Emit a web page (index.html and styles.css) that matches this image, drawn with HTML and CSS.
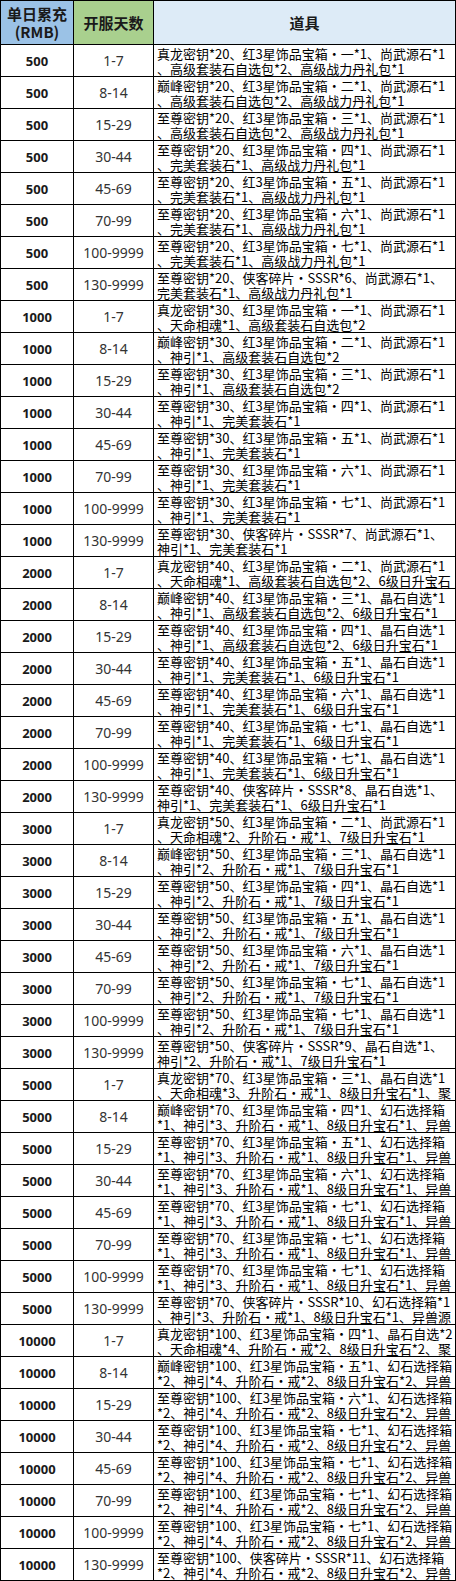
FILE: index.html
```html
<!DOCTYPE html>
<html lang="zh-CN">
<head>
<meta charset="utf-8">
<title>单日累充</title>
<link rel="stylesheet" href="styles.css">
</head>
<body>
<table class="rewards">
<colgroup><col class="c-amt"><col class="c-days"><col class="c-items"></colgroup>
<thead>
<tr>
<th class="h-amt"><div class="hcell">单日累充<br>(RMB)</div></th>
<th class="h-days"><div class="hcell">开服天数</div></th>
<th class="h-items"><div class="hcell">道具</div></th>
</tr>
</thead>
<tbody>
<tr><td class="amt"><div class="cell">500</div></td><td class="days"><div class="cell">1-7</div></td><td class="items"><div class="clip">真龙密钥*20、红3星饰品宝箱・一*1、尚武源石*1<br>、高级套装石自选包*2、高级战力丹礼包*1</div></td></tr>
<tr><td class="amt"><div class="cell">500</div></td><td class="days"><div class="cell">8-14</div></td><td class="items"><div class="clip">巅峰密钥*20、红3星饰品宝箱・二*1、尚武源石*1<br>、高级套装石自选包*2、高级战力丹礼包*1</div></td></tr>
<tr><td class="amt"><div class="cell">500</div></td><td class="days"><div class="cell">15-29</div></td><td class="items"><div class="clip">至尊密钥*20、红3星饰品宝箱・三*1、尚武源石*1<br>、高级套装石自选包*2、高级战力丹礼包*1</div></td></tr>
<tr><td class="amt"><div class="cell">500</div></td><td class="days"><div class="cell">30-44</div></td><td class="items"><div class="clip">至尊密钥*20、红3星饰品宝箱・四*1、尚武源石*1<br>、完美套装石*1、高级战力丹礼包*1</div></td></tr>
<tr><td class="amt"><div class="cell">500</div></td><td class="days"><div class="cell">45-69</div></td><td class="items"><div class="clip">至尊密钥*20、红3星饰品宝箱・五*1、尚武源石*1<br>、完美套装石*1、高级战力丹礼包*1</div></td></tr>
<tr><td class="amt"><div class="cell">500</div></td><td class="days"><div class="cell">70-99</div></td><td class="items"><div class="clip">至尊密钥*20、红3星饰品宝箱・六*1、尚武源石*1<br>、完美套装石*1、高级战力丹礼包*1</div></td></tr>
<tr><td class="amt"><div class="cell">500</div></td><td class="days"><div class="cell">100-9999</div></td><td class="items"><div class="clip">至尊密钥*20、红3星饰品宝箱・七*1、尚武源石*1<br>、完美套装石*1、高级战力丹礼包*1</div></td></tr>
<tr><td class="amt"><div class="cell">500</div></td><td class="days"><div class="cell">130-9999</div></td><td class="items"><div class="clip">至尊密钥*20、侠客碎片・SSSR*6、尚武源石*1、<br>完美套装石*1、高级战力丹礼包*1</div></td></tr>

<tr><td class="amt"><div class="cell">1000</div></td><td class="days"><div class="cell">1-7</div></td><td class="items"><div class="clip">真龙密钥*30、红3星饰品宝箱・一*1、尚武源石*1<br>、天命相魂*1、高级套装石自选包*2</div></td></tr>
<tr><td class="amt"><div class="cell">1000</div></td><td class="days"><div class="cell">8-14</div></td><td class="items"><div class="clip">巅峰密钥*30、红3星饰品宝箱・二*1、尚武源石*1<br>、神引*1、高级套装石自选包*2</div></td></tr>
<tr><td class="amt"><div class="cell">1000</div></td><td class="days"><div class="cell">15-29</div></td><td class="items"><div class="clip">至尊密钥*30、红3星饰品宝箱・三*1、尚武源石*1<br>、神引*1、高级套装石自选包*2</div></td></tr>
<tr><td class="amt"><div class="cell">1000</div></td><td class="days"><div class="cell">30-44</div></td><td class="items"><div class="clip">至尊密钥*30、红3星饰品宝箱・四*1、尚武源石*1<br>、神引*1、完美套装石*1</div></td></tr>
<tr><td class="amt"><div class="cell">1000</div></td><td class="days"><div class="cell">45-69</div></td><td class="items"><div class="clip">至尊密钥*30、红3星饰品宝箱・五*1、尚武源石*1<br>、神引*1、完美套装石*1</div></td></tr>
<tr><td class="amt"><div class="cell">1000</div></td><td class="days"><div class="cell">70-99</div></td><td class="items"><div class="clip">至尊密钥*30、红3星饰品宝箱・六*1、尚武源石*1<br>、神引*1、完美套装石*1</div></td></tr>
<tr><td class="amt"><div class="cell">1000</div></td><td class="days"><div class="cell">100-9999</div></td><td class="items"><div class="clip">至尊密钥*30、红3星饰品宝箱・七*1、尚武源石*1<br>、神引*1、完美套装石*1</div></td></tr>
<tr><td class="amt"><div class="cell">1000</div></td><td class="days"><div class="cell">130-9999</div></td><td class="items"><div class="clip">至尊密钥*30、侠客碎片・SSSR*7、尚武源石*1、<br>神引*1、完美套装石*1</div></td></tr>

<tr><td class="amt"><div class="cell">2000</div></td><td class="days"><div class="cell">1-7</div></td><td class="items"><div class="clip">真龙密钥*40、红3星饰品宝箱・二*1、尚武源石*1<br>、天命相魂*1、高级套装石自选包*2、6级日升宝石</div></td></tr>
<tr><td class="amt"><div class="cell">2000</div></td><td class="days"><div class="cell">8-14</div></td><td class="items"><div class="clip">巅峰密钥*40、红3星饰品宝箱・三*1、晶石自选*1<br>、神引*1、高级套装石自选包*2、6级日升宝石*1</div></td></tr>
<tr><td class="amt"><div class="cell">2000</div></td><td class="days"><div class="cell">15-29</div></td><td class="items"><div class="clip">至尊密钥*40、红3星饰品宝箱・四*1、晶石自选*1<br>、神引*1、高级套装石自选包*2、6级日升宝石*1</div></td></tr>
<tr><td class="amt"><div class="cell">2000</div></td><td class="days"><div class="cell">30-44</div></td><td class="items"><div class="clip">至尊密钥*40、红3星饰品宝箱・五*1、晶石自选*1<br>、神引*1、完美套装石*1、6级日升宝石*1</div></td></tr>
<tr><td class="amt"><div class="cell">2000</div></td><td class="days"><div class="cell">45-69</div></td><td class="items"><div class="clip">至尊密钥*40、红3星饰品宝箱・六*1、晶石自选*1<br>、神引*1、完美套装石*1、6级日升宝石*1</div></td></tr>
<tr><td class="amt"><div class="cell">2000</div></td><td class="days"><div class="cell">70-99</div></td><td class="items"><div class="clip">至尊密钥*40、红3星饰品宝箱・七*1、晶石自选*1<br>、神引*1、完美套装石*1、6级日升宝石*1</div></td></tr>
<tr><td class="amt"><div class="cell">2000</div></td><td class="days"><div class="cell">100-9999</div></td><td class="items"><div class="clip">至尊密钥*40、红3星饰品宝箱・七*1、晶石自选*1<br>、神引*1、完美套装石*1、6级日升宝石*1</div></td></tr>
<tr><td class="amt"><div class="cell">2000</div></td><td class="days"><div class="cell">130-9999</div></td><td class="items"><div class="clip">至尊密钥*40、侠客碎片・SSSR*8、晶石自选*1、<br>神引*1、完美套装石*1、6级日升宝石*1</div></td></tr>

<tr><td class="amt"><div class="cell">3000</div></td><td class="days"><div class="cell">1-7</div></td><td class="items"><div class="clip">真龙密钥*50、红3星饰品宝箱・二*1、尚武源石*1<br>、天命相魂*2、升阶石・戒*1、7级日升宝石*1</div></td></tr>
<tr><td class="amt"><div class="cell">3000</div></td><td class="days"><div class="cell">8-14</div></td><td class="items"><div class="clip">巅峰密钥*50、红3星饰品宝箱・三*1、晶石自选*1<br>、神引*2、升阶石・戒*1、7级日升宝石*1</div></td></tr>
<tr><td class="amt"><div class="cell">3000</div></td><td class="days"><div class="cell">15-29</div></td><td class="items"><div class="clip">至尊密钥*50、红3星饰品宝箱・四*1、晶石自选*1<br>、神引*2、升阶石・戒*1、7级日升宝石*1</div></td></tr>
<tr><td class="amt"><div class="cell">3000</div></td><td class="days"><div class="cell">30-44</div></td><td class="items"><div class="clip">至尊密钥*50、红3星饰品宝箱・五*1、晶石自选*1<br>、神引*2、升阶石・戒*1、7级日升宝石*1</div></td></tr>
<tr><td class="amt"><div class="cell">3000</div></td><td class="days"><div class="cell">45-69</div></td><td class="items"><div class="clip">至尊密钥*50、红3星饰品宝箱・六*1、晶石自选*1<br>、神引*2、升阶石・戒*1、7级日升宝石*1</div></td></tr>
<tr><td class="amt"><div class="cell">3000</div></td><td class="days"><div class="cell">70-99</div></td><td class="items"><div class="clip">至尊密钥*50、红3星饰品宝箱・七*1、晶石自选*1<br>、神引*2、升阶石・戒*1、7级日升宝石*1</div></td></tr>
<tr><td class="amt"><div class="cell">3000</div></td><td class="days"><div class="cell">100-9999</div></td><td class="items"><div class="clip">至尊密钥*50、红3星饰品宝箱・七*1、晶石自选*1<br>、神引*2、升阶石・戒*1、7级日升宝石*1</div></td></tr>
<tr><td class="amt"><div class="cell">3000</div></td><td class="days"><div class="cell">130-9999</div></td><td class="items"><div class="clip">至尊密钥*50、侠客碎片・SSSR*9、晶石自选*1、<br>神引*2、升阶石・戒*1、7级日升宝石*1</div></td></tr>

<tr><td class="amt"><div class="cell">5000</div></td><td class="days"><div class="cell">1-7</div></td><td class="items"><div class="clip">真龙密钥*70、红3星饰品宝箱・三*1、晶石自选*1<br>、天命相魂*3、升阶石・戒*1、8级日升宝石*1、聚</div></td></tr>
<tr><td class="amt"><div class="cell">5000</div></td><td class="days"><div class="cell">8-14</div></td><td class="items"><div class="clip">巅峰密钥*70、红3星饰品宝箱・四*1、幻石选择箱<br>*1、神引*3、升阶石・戒*1、8级日升宝石*1、异兽</div></td></tr>
<tr><td class="amt"><div class="cell">5000</div></td><td class="days"><div class="cell">15-29</div></td><td class="items"><div class="clip">至尊密钥*70、红3星饰品宝箱・五*1、幻石选择箱<br>*1、神引*3、升阶石・戒*1、8级日升宝石*1、异兽</div></td></tr>
<tr><td class="amt"><div class="cell">5000</div></td><td class="days"><div class="cell">30-44</div></td><td class="items"><div class="clip">至尊密钥*70、红3星饰品宝箱・六*1、幻石选择箱<br>*1、神引*3、升阶石・戒*1、8级日升宝石*1、异兽</div></td></tr>
<tr><td class="amt"><div class="cell">5000</div></td><td class="days"><div class="cell">45-69</div></td><td class="items"><div class="clip">至尊密钥*70、红3星饰品宝箱・七*1、幻石选择箱<br>*1、神引*3、升阶石・戒*1、8级日升宝石*1、异兽</div></td></tr>
<tr><td class="amt"><div class="cell">5000</div></td><td class="days"><div class="cell">70-99</div></td><td class="items"><div class="clip">至尊密钥*70、红3星饰品宝箱・七*1、幻石选择箱<br>*1、神引*3、升阶石・戒*1、8级日升宝石*1、异兽</div></td></tr>
<tr><td class="amt"><div class="cell">5000</div></td><td class="days"><div class="cell">100-9999</div></td><td class="items"><div class="clip">至尊密钥*70、红3星饰品宝箱・七*1、幻石选择箱<br>*1、神引*3、升阶石・戒*1、8级日升宝石*1、异兽</div></td></tr>
<tr><td class="amt"><div class="cell">5000</div></td><td class="days"><div class="cell">130-9999</div></td><td class="items"><div class="clip">至尊密钥*70、侠客碎片・SSSR*10、幻石选择箱*1<br>、神引*3、升阶石・戒*1、8级日升宝石*1、异兽源</div></td></tr>

<tr><td class="amt"><div class="cell">10000</div></td><td class="days"><div class="cell">1-7</div></td><td class="items"><div class="clip">真龙密钥*100、红3星饰品宝箱・四*1、晶石自选*2<br>、天命相魂*4、升阶石・戒*2、8级日升宝石*2、聚</div></td></tr>
<tr><td class="amt"><div class="cell">10000</div></td><td class="days"><div class="cell">8-14</div></td><td class="items"><div class="clip">巅峰密钥*100、红3星饰品宝箱・五*1、幻石选择箱<br>*2、神引*4、升阶石・戒*2、8级日升宝石*2、异兽</div></td></tr>
<tr><td class="amt"><div class="cell">10000</div></td><td class="days"><div class="cell">15-29</div></td><td class="items"><div class="clip">至尊密钥*100、红3星饰品宝箱・六*1、幻石选择箱<br>*2、神引*4、升阶石・戒*2、8级日升宝石*2、异兽</div></td></tr>
<tr><td class="amt"><div class="cell">10000</div></td><td class="days"><div class="cell">30-44</div></td><td class="items"><div class="clip">至尊密钥*100、红3星饰品宝箱・七*1、幻石选择箱<br>*2、神引*4、升阶石・戒*2、8级日升宝石*2、异兽</div></td></tr>
<tr><td class="amt"><div class="cell">10000</div></td><td class="days"><div class="cell">45-69</div></td><td class="items"><div class="clip">至尊密钥*100、红3星饰品宝箱・七*1、幻石选择箱<br>*2、神引*4、升阶石・戒*2、8级日升宝石*2、异兽</div></td></tr>
<tr><td class="amt"><div class="cell">10000</div></td><td class="days"><div class="cell">70-99</div></td><td class="items"><div class="clip">至尊密钥*100、红3星饰品宝箱・七*1、幻石选择箱<br>*2、神引*4、升阶石・戒*2、8级日升宝石*2、异兽</div></td></tr>
<tr><td class="amt"><div class="cell">10000</div></td><td class="days"><div class="cell">100-9999</div></td><td class="items"><div class="clip">至尊密钥*100、红3星饰品宝箱・七*1、幻石选择箱<br>*2、神引*4、升阶石・戒*2、8级日升宝石*2、异兽</div></td></tr>
<tr><td class="amt"><div class="cell">10000</div></td><td class="days"><div class="cell">130-9999</div></td><td class="items"><div class="clip">至尊密钥*100、侠客碎片・SSSR*11、幻石选择箱<br>*2、神引*4、升阶石・戒*2、8级日升宝石*2、异兽</div></td></tr>
</tbody>
</table>
</body>
</html>
```
FILE: styles.css
```css
html, body {
  margin: 0;
  padding: 0;
  background: #ffffff;
}

.rewards {
  border-collapse: separate;
  border-spacing: 0;
  table-layout: fixed;
  width: 456px;
  border-top: 1px solid #000;
  border-left: 1px solid #000;
  font-family: "Noto Sans CJK SC", "Noto Sans", sans-serif;
}

.c-amt { width: 73px; }
.c-days { width: 80px; }
.c-items { width: 302px; }

.rewards th,
.rewards td {
  padding: 0;
  border-right: 1px solid #000;
  border-bottom: 1px solid #000;
  vertical-align: middle;
}

.h-amt { background: #9bc2e6; }
.h-days { background: #a9d08e; }
.h-items { background: #ddebf7; }

.hcell {
  height: 43px;
  display: flex;
  align-items: center;
  justify-content: center;
  text-align: center;
  font-size: 15px;
  line-height: 18px;
  font-weight: bold;
  color: #1a1a1a;
}

.cell {
  height: 31px;
  display: flex;
  align-items: center;
  justify-content: center;
  white-space: nowrap;
}

.amt .cell {
  font-family: "Noto Sans", "Noto Sans CJK SC", sans-serif;
  font-size: 13px;
  font-weight: bold;
  color: #1a1a1a;
}

.days .cell {
  font-family: "Noto Sans", "Noto Sans CJK SC", sans-serif;
  font-size: 14px;
  color: #333333;
}

.clip {
  box-sizing: border-box;
  height: 31px;
  overflow-x: clip;
  overflow-y: visible;
  white-space: nowrap;
  padding: 1px 0 0 3px;
  font-size: 13px;
  line-height: 15px;
  color: #000;
}
```
